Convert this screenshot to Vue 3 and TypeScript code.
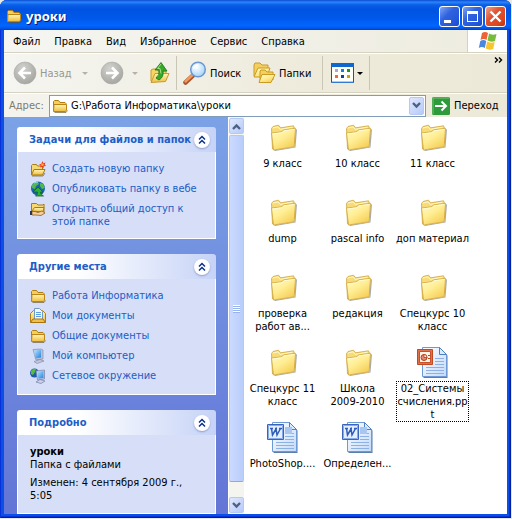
<script setup lang="ts">
import { ref } from 'vue'

interface Task { icon: string; label: string }
interface Entry { kind: 'folder' | 'ppt' | 'doc'; label: string; focused?: boolean }

const menus: string[] = ['Файл', 'Правка', 'Вид', 'Избранное', 'Сервис', 'Справка']
const address = ref('G:\\Работа Информатика\\уроки')

const groups: { title: string; items: Task[] }[] = [
  {
    title: 'Задачи для файлов и папок',
    items: [
      { icon: 'new', label: 'Создать новую папку' },
      { icon: 'publish', label: 'Опубликовать папку в вебе' },
      { icon: 'share', label: 'Открыть общий доступ к\nэтой папке' },
    ],
  },
  {
    title: 'Другие места',
    items: [
      { icon: 'folder', label: 'Работа Информатика' },
      { icon: 'docs', label: 'Мои документы' },
      { icon: 'folder', label: 'Общие документы' },
      { icon: 'computer', label: 'Мой компьютер' },
      { icon: 'network', label: 'Сетевое окружение' },
    ],
  },
]

const entries: Entry[] = [
  { kind: 'folder', label: '9 класс' },
  { kind: 'folder', label: '10 класс' },
  { kind: 'folder', label: '11 класс' },
  { kind: 'folder', label: 'dump' },
  { kind: 'folder', label: 'pascal info' },
  { kind: 'folder', label: 'доп материал' },
  { kind: 'folder', label: 'проверка\nработ ав...' },
  { kind: 'folder', label: 'редакция' },
  { kind: 'folder', label: 'Спецкурс 10\nкласс' },
  { kind: 'folder', label: 'Спецкурс 11\nкласс' },
  { kind: 'folder', label: 'Школа\n2009-2010' },
  { kind: 'ppt', label: '02_Системы\nсчисления.pp\nt', focused: true },
  { kind: 'doc', label: 'PhotoShop....' },
  { kind: 'doc', label: 'Определен...' },
]
</script>

<template>
  <svg class="defs" width="0" height="0" aria-hidden="true">
    <defs>
      <linearGradient id="gFolder" x1="0" y1="0" x2="0.7" y2="1">
        <stop offset="0" stop-color="#fffbc8" /><stop offset="0.5" stop-color="#ffee94" /><stop offset="1" stop-color="#f5cd55" />
      </linearGradient>
      <linearGradient id="gSmall" x1="0" y1="0" x2="0" y2="1">
        <stop offset="0" stop-color="#fff6b8" /><stop offset="1" stop-color="#f0bd3c" />
      </linearGradient>
      <radialGradient id="gGrey" cx="0.4" cy="0.3" r="0.75">
        <stop offset="0" stop-color="#d2d2ce" /><stop offset="1" stop-color="#a3a3a0" />
      </radialGradient>
      <linearGradient id="gScreen" x1="0" y1="0" x2="1" y2="1">
        <stop offset="0" stop-color="#b9e6ff" /><stop offset="1" stop-color="#1f7fe0" />
      </linearGradient>
      <linearGradient id="gPage" x1="0" y1="0" x2="1" y2="1">
        <stop offset="0" stop-color="#ffffff" /><stop offset="1" stop-color="#c3dafa" />
      </linearGradient>
      <radialGradient id="gLens" cx="0.4" cy="0.35" r="0.7">
        <stop offset="0" stop-color="#ffffff" /><stop offset="1" stop-color="#9fd2f8" />
      </radialGradient>
      <symbol id="i-folder" viewBox="0 0 16 16">
        <path d="M1.5 13V3.5l1-1h4l1.500 2h5l1 1V7" fill="#f4cf60" stroke="#b07d10" />
        <path d="M1.500 13.500 2 6.500h12.500V12l-1 1.500z" fill="url(#gSmall)" stroke="#bb8515" />
        <path d="M2.500 14.500h11.500l1.500-2" fill="none" stroke="#6b5420" stroke-opacity=".65" />
      </symbol>
      <symbol id="i-new" viewBox="0 0 16 16">
        <path d="M1.500 14V4.500l1-1h4l1 1.500h5V8" fill="#f6d873" stroke="#a87a18" />
        <path d="M1.500 14 4 8.500h11L12.500 14z" fill="url(#gSmall)" stroke="#a87a18" />
        <path d="M2 15h11l2-3" fill="none" stroke="#5c4820" stroke-opacity=".6" />
        <path d="m12.500 0 .8 2.200 2.200-.7-.8 2 1.300 1.500-2.200.3-.3 2.200-1.500-1.700-2 .8.700-2.100L9 3.300l2.300-.3z" fill="#ed3d16" />
        <circle cx="12.500" cy="3.800" r="1.300" fill="#ffad39" />
      </symbol>
      <symbol id="i-publish" viewBox="0 0 16 16">
        <circle cx="8" cy="7.500" r="7" fill="#1c62b8" />
        <path d="M2 4q3-4 6-3l1 2-3 2-1 3-3-1zM10 2l3 1 2 4-3 1-2-3z" fill="#55b947" />
        <path d="M4 2q2-1 4-1" stroke="#a5d8ff" fill="none" />
        <path d="m8 6 5 5h-2.500q0 3 3 4h-8q2-1 2-4H3z" fill="#2fae34" stroke="#08661b" stroke-width=".8" />
      </symbol>
      <symbol id="i-share" viewBox="0 0 16 16">
        <path d="M1.500 12V2.500h5L8 4h5l1-1v9z" fill="#f8d871" stroke="#a87a18" />
        <path d="M2 10 4.500 6.500H14L13 11z" fill="url(#gSmall)" stroke="#a87a18" />
        <path d="M2 10.500h3L8 11.500l4-1.500 3 2-4 2.500-5-.5H2z" fill="#f4cf9c" stroke="#8c5e2c" stroke-width=".8" />
        <path d="M0 10h2v4H0z" fill="#26375c" />
      </symbol>
      <symbol id="i-docs" viewBox="0 0 16 16">
        <path d="M.5 14V5.500l3-3h9l3 3V14z" fill="url(#gSmall)" stroke="#ad7d17" />
        <path d="M4.500.5h5l3 3V12h-8z" fill="#eef7ff" stroke="#7796bf" />
        <path d="M6 4.500h5M6 6.500h5M6 8.500h5" stroke="#5c9ce0" />
        <path d="M.5 14.500 3 11h10l2.500 3.500z" fill="#f0c04b" stroke="#a7730e" />
      </symbol>
      <symbol id="i-computer" viewBox="0 0 16 16">
        <path d="M3 1.500 11 1l2 1v9l-7 1z" fill="#b9c1d8" stroke="#8790b3" stroke-width=".7" />
        <path d="m4 2.500 7-.5v7.500l-6 1z" fill="url(#gScreen)" />
        <path d="m7 11.500 4-.5 1 2-4 1z" fill="#8f98b4" />
        <path d="m4 13.500 6-2 4 1.500-7 2.500z" fill="#c4c9de" stroke="#848cab" stroke-width=".7" />
      </symbol>
      <symbol id="i-network" viewBox="0 0 16 16">
        <circle cx="4.500" cy="5" r="4.500" fill="#2258b5" />
        <path d="M1 3q2-3 5-2L5 4 3 7 1 6z" fill="#56bd3f" />
        <path d="m6 3 8.500-1v9L7.500 12z" fill="#c4cbe0" stroke="#747fa8" stroke-width=".7" />
        <path d="m7 4 6.500-1v7l-5 .8z" fill="url(#gScreen)" />
        <path d="m6 14 4-2.500 5 1.500-4 2.500z" fill="#cdd2e6" stroke="#747fa8" stroke-width=".7" />
      </symbol>
      <symbol id="i-big" viewBox="0 0 32 32">
        <path d="m8 30 20.500-3.500L30 8.500l-1.500-.5-1 18L7 29z" fill="#444" opacity=".45" />
        <path d="M5.500 28 4.500 7.500l1.500-2 5.500-1.300 2.200 2.600 12.800-2 1 2.500V22z" fill="#f6db78" stroke="#cfa640" stroke-width=".8" />
        <path d="m5.800 7 5.200-1.200 2.200 2.600 12.300-2.200" fill="none" stroke="#fff9cc" />
        <path d="m4.500 12 10.300-1.200 1.700-1.900 12-1.600-1.300 18.500L6.500 29z" fill="url(#gFolder)" stroke="#d0a43c" stroke-width=".8" />
        <path d="m5.500 12.900 9.700-1.200 1.800-1.900 10.500-1.400" fill="none" stroke="#fffde0" stroke-width=".8" />
      </symbol>
      <symbol id="i-page" viewBox="0 0 32 32">
        <path d="M6.500 2h16l8 7.500V32h-24z" fill="#24548e" opacity=".75" />
        <path d="M5.500 1.500h17l7 7v22h-24z" fill="url(#gPage)" stroke="#6d9ad6" />
        <path d="M22.500 1.500v7h7z" fill="#dcebfd" stroke="#4e7fc2" />
        <path d="M18 12.500h9M18 15.500h9M18 18.500h9M9 21.500h18M9 24.500h18M9 27.500h18" stroke="#8db1e3" />
      </symbol>
      <symbol id="i-ppt" viewBox="0 0 32 32">
        <use href="#i-page" />
        <path d="M.5 3.500h15v15H.5z" fill="#e2714b" stroke="#c04a20" />
        <path d="M2.500 5.500h11v11h-11z" fill="#fff3ea" stroke="#c8502a" />
        <circle cx="7" cy="11.500" r="3" fill="#e58a68" stroke="#b03e18" />
        <path d="M7 11.500V8.500a3 3 0 0 1 3 3z" fill="#fff3ea" stroke="#b03e18" stroke-width=".8" />
        <path d="M11 9.500h2M11 12.500h2" stroke="#c54718" />
      </symbol>
      <symbol id="i-doc" viewBox="0 0 32 32">
        <use href="#i-page" />
        <path d="M18 6h7v7h-7z" fill="#a8c6ef" />
        <path d="M.5 3.500h16v15H.5z" fill="#e3efff" stroke="#3a63ba" />
        <path d="M1.500 4.500h14v13h-14z" fill="none" stroke="#86abea" />
        <path d="M3 7.500h3M4.500 7.500 5.500 14 9 8 10 14 13.500 7.500M12 7.500h3M8 7.500h2" fill="none" stroke="#2f5cb8" stroke-width="1.500" />
      </symbol>
    </defs>
  </svg>

  <main class="window">
    <header class="titlebar">
      <svg class="i16"><use href="#i-folder" /></svg>
      <h1>уроки</h1>
      <div class="controls">
        <button aria-label="Свернуть"><svg viewBox="0 0 21 21"><path d="M5 14h7v3H5z" fill="#fff" /></svg></button>
        <button aria-label="Развернуть"><svg viewBox="0 0 21 21"><path d="M5 5h11v11H5zM6 8v7h9V8z" fill="#fff" fill-rule="evenodd" /></svg></button>
        <button class="close" aria-label="Закрыть"><svg viewBox="0 0 21 21"><path d="m5.500 5.500 10 10m0-10-10 10" stroke="#fff" stroke-width="2.400" /></svg></button>
      </div>
    </header>

    <div class="client">
      <div class="menurow">
        <nav class="menu"><button v-for="m in menus" :key="m">{{ m }}</button></nav>
        <div class="flag">
          <svg width="20" height="20" viewBox="0 0 20 20">
            <path d="M4 2q3-2 6 0L8.500 9q-3-2-6 0z" fill="#ee6335" />
            <path d="M11 2.500q3 2 7.500.5L17 10q-4 1.500-7.500-.5z" fill="#77bb3c" />
            <path d="M2.300 10q3-2 6 0l-1.500 7q-3-2-6 0z" fill="#4b87df" />
            <path d="M9.200 10.500q3 2 7.500.5l-1.500 7q-4 1.500-7.500-.5z" fill="#f7c52e" />
          </svg>
        </div>
      </div>

      <div class="toolbar">
        <button class="tool back" disabled>
          <svg width="24" height="24" viewBox="0 0 24 24"><circle cx="12" cy="12" r="11" fill="url(#gGrey)" stroke="#aaa9a4" stroke-width=".6" /><path d="M18 12H7m5-5.500L6.500 12l5.500 5.500" fill="none" stroke="#fff" stroke-width="2.600" /></svg>
          <span>Назад</span>
        </button>
        <span class="arrow dim"></span>
        <button class="tool forward" disabled aria-label="Вперед">
          <svg width="24" height="24" viewBox="0 0 24 24"><circle cx="12" cy="12" r="11" fill="url(#gGrey)" stroke="#aaa9a4" stroke-width=".6" /><path d="M6 12h11m-5-5.500 5.500 5.500-5.500 5.500" fill="none" stroke="#fff" stroke-width="2.600" /></svg>
        </button>
        <span class="arrow dim"></span>
        <button class="tool up" aria-label="Вверх">
          <svg width="20" height="24" viewBox="0 0 20 24">
            <path d="M1 20V9l2-1h4l1 2h8v9z" fill="#f5d566" stroke="#c89b29" />
            <path d="m1 21.500 4-9h14l-3.500 8z" fill="url(#gSmall)" stroke="#c89b29" />
            <path d="M9 19q5-3 4-9h4L11 1.500 5 9h4q1 5-3 8z" fill="#35a828" stroke="#14721a" stroke-width=".8" />
            <path d="m11 3-3.500 4.500H10l1 5" fill="none" stroke="#a1e184" />
          </svg>
        </button>
        <i class="sep"></i>
        <button class="tool search">
          <svg width="24" height="24" viewBox="0 0 24 24">
            <path d="m2.500 21.500 8-7.500" stroke="#a8572d" stroke-width="4.500" stroke-linecap="round" /><path d="m2.500 20.500 7.500-7" stroke="#f29a5b" stroke-width="2.400" stroke-linecap="round" />
            <circle cx="15" cy="8.500" r="7.300" fill="url(#gLens)" stroke="#6c97d3" stroke-width="1.500" />
            <path d="M10.500 8q1-4 5-4" fill="none" stroke="#fff" stroke-width="1.500" />
          </svg>
          <span>Поиск</span>
        </button>
        <button class="tool folders">
          <svg width="24" height="24" viewBox="0 0 24 24">
            <path d="M2 15V4l1-2h5l2 2h6v8" fill="#f4d05b" stroke="#c99a28" /><path d="m2 16 4-9h12l-3 9z" fill="url(#gFolder)" stroke="#c99a28" />
            <path d="M8 20V10l1-1h4l2 2h6v8" fill="#f4d05b" stroke="#c99a28" /><path d="m7 21.500 3-8h13l-4 8z" fill="url(#gFolder)" stroke="#c99a28" />
          </svg>
          <span>Папки</span>
        </button>
        <i class="sep"></i>
        <button class="tool views" aria-label="Вид">
          <svg width="23" height="20" viewBox="0 0 23 20">
            <path d="M.5.5h22v19H.5z" fill="#fffffa" stroke="#0b58b8" /><path d="M0 0h23v4H0z" fill="#1068cf" /><path d="M1 19h21" stroke="#5b9cea" />
            <path d="M4 6h3v3H4z" fill="#aaa6d8" /><path d="M10 6h3v3h-3z" fill="#1480e0" /><path d="M16 6h3v3h-3z" fill="#149a28" />
            <path d="M4 12h3v3H4z" fill="#f1683d" /><path d="M10 12h3v3h-3z" fill="#123caf" /><path d="M16 12h3v3h-3z" fill="#d99b10" />
          </svg>
          <span class="arrow"></span>
        </button>
        <i class="sep"></i>
        <button class="more" aria-label="Другие кнопки"><svg width="9" height="6" viewBox="0 0 9 6"><path d="m1 .5 2.500 2.500L1 5.500M5 .5 7.500 3 5 5.500" fill="none" stroke="#000" stroke-width="1.400" /></svg></button>
      </div>

      <div class="addressbar">
        <label for="addr">Адрес:</label>
        <div class="combo">
          <svg class="i16"><use href="#i-folder" /></svg>
          <input id="addr" v-model="address" type="text" />
          <button class="chev" aria-label="Список"><svg width="9" height="7" viewBox="0 0 9 7"><path d="m1 1 3.500 3.500L8 1" fill="none" stroke="#4d6185" stroke-width="2.400" /></svg></button>
        </div>
        <button class="go">
          <svg width="18" height="18" viewBox="0 0 18 18"><rect width="18" height="18" rx="1.500" fill="#2f9a3b" /><path d="M1 17V1h16" fill="none" stroke="#73c36f" /><path d="M3 9h11M9.500 4.500 14 9l-4.500 4.500" fill="none" stroke="#fff" stroke-width="2" /></svg>
          <span>Переход</span>
        </button>
      </div>

      <div class="body">
        <aside class="tasks">
          <section v-for="g in groups" :key="g.title" class="group">
            <div class="head">
              <h2>{{ g.title }}</h2>
              <button class="fold" aria-label="Свернуть раздел"><svg viewBox="0 0 16 16"><path d="m5 7.500 3-3 3 3m-6 4 3-3 3 3" fill="none" stroke="#0a318f" stroke-width="1.500" /></svg></button>
            </div>
            <ul>
              <li v-for="t in g.items" :key="t.label"><a href="#"><svg class="i16"><use :href="'#i-' + t.icon" /></svg><span>{{ t.label }}</span></a></li>
            </ul>
          </section>
          <section class="group last">
            <div class="head">
              <h2>Подробно</h2>
              <button class="fold" aria-label="Свернуть раздел"><svg viewBox="0 0 16 16"><path d="m5 7.500 3-3 3 3m-6 4 3-3 3 3" fill="none" stroke="#0a318f" stroke-width="1.500" /></svg></button>
            </div>
            <div class="details">
              <b>уроки</b>
              <p>Папка с файлами</p>
              <p class="date">Изменен: 4 сентября 2009 г.,<br />5:05</p>
            </div>
          </section>
        </aside>

        <div class="scroll">
          <button class="chev" aria-label="Вверх"><svg width="9" height="7" viewBox="0 0 9 7"><path d="m1 6 3.500-3.500L8 6" fill="none" stroke="#4d6185" stroke-width="2.400" /></svg></button>
          <div class="thumb"><i></i></div>
          <button class="chev" aria-label="Вниз"><svg width="9" height="7" viewBox="0 0 9 7"><path d="m1 1 3.500 3.500L8 1" fill="none" stroke="#4d6185" stroke-width="2.400" /></svg></button>
        </div>

        <ul class="files">
          <li v-for="e in entries" :key="e.label">
            <svg class="i32"><use :href="e.kind === 'folder' ? '#i-big' : '#i-' + e.kind" /></svg>
            <span :class="{ focused: e.focused }">{{ e.label }}</span>
          </li>
        </ul>
      </div>
    </div>
  </main>
</template>

<style>
body { background: #e6e9e4; }
</style>

<style scoped>
* { box-sizing: border-box; }
.defs { position: absolute; }
.window {
  display: flex; flex-direction: column;
  min-height: calc(100vh - 1px); margin-right: 1px; padding: 0 4px 4px;
  background: #0a4fe6; border-radius: 7px 7px 0 0;
  box-shadow: inset 1px 0 #0831d9, inset -1px -1px #001ea0, inset -2px -2px #0831d9;
  font: 11px/13px "DejaVu Sans Condensed", "DejaVu Sans", sans-serif; color: #000;
}
button { font: inherit; color: inherit; border: 0; padding: 0; margin: 0; background: none; display: flex; align-items: center; }
h1, h2, p, ul { margin: 0; padding: 0; list-style: none; }
svg { display: block; flex: none; }
.i16 { width: 16px; height: 16px; }
.i32 { width: 32px; height: 32px; }

.titlebar {
  display: flex; align-items: center; height: 30px; margin: 0 -4px; padding: 2px 5px 0 6px;
  border-radius: 7px 7px 0 0;
  background: linear-gradient(#0a4bd0 0, #2a86fb 7%, #0a5fe8 16%, #0053e1 30%, #0058ea 60%, #0066ff 85%, #0059ee 93%, #003dd0);
}
.titlebar h1 { flex: 1; margin-left: 4px; font: bold 13px/16px "Noto Sans", "DejaVu Sans Condensed", sans-serif; color: #fff; text-shadow: 1px 1px #0a1883; }
.controls { display: flex; gap: 2px; }
.controls button { width: 21px; height: 21px; border: 1px solid #fff; border-radius: 3px; background: linear-gradient(135deg, #7fa6f6, #2f62de 40%, #2458dc 75%, #1a4ac6); }
.controls svg { width: 21px; height: 21px; margin: -1px; }
.controls .close { background: linear-gradient(135deg, #f3a08a, #df5331 40%, #dd4720 75%, #bb3210); }

.client { flex: 1; display: flex; flex-direction: column; background: #efeddf; }
.menurow { display: flex; height: 23px; border-bottom: 1px solid #d5d2c2; background: linear-gradient(90deg, #f5f5f2, #eeecdf); }
.menu { flex: 1; display: flex; padding-left: 2px; border-right: 1px solid #d5d2c2; }
.menu button { padding: 0 7px; }
.flag { width: 39px; display: flex; align-items: center; justify-content: center; background: #fff; }

.toolbar { display: flex; align-items: center; height: 40px; padding-left: 9px; border-top: 1px solid #fff; border-bottom: 1px solid #d5d2c2; background: linear-gradient(90deg, #f5f5f1, #eeebdc 60%, #ece9d8); }
.tool { gap: 3px; }
.back { color: #99988f; width: 69px; }
.forward { margin-left: 12px; width: 32px; }
.arrow { width: 0; height: 0; border: 3px solid transparent; border-top-color: #000; border-bottom: 0; }
.arrow.dim { border-top-color: #b5b3a9; }
.up { margin: 0 6px 0 12px; }
.sep { width: 1px; height: 34px; background: #c9c6b6; }
.search { margin-left: 6px; width: 69px; }
.folders { margin-right: 10px; width: 60px; }
.views { margin: 0 6px 0 8px; }
.more { align-self: flex-start; margin: 3px 4px 0 auto; }

.addressbar { display: flex; align-items: center; height: 24px; padding-left: 5px; border-top: 1px solid #fff; background: linear-gradient(90deg, #f4f3ed, #ece9d8); }
.addressbar label { width: 40px; color: #7d7b72; }
.combo { flex: 1; min-width: 0; display: flex; align-items: center; height: 22px; padding: 0 1px 0 2px; border: 1px solid #7f9db9; background: #fff; }
.combo input { flex: 1; min-width: 0; height: 18px; margin-left: 3px; padding: 0; border: 0; outline: 0; background: none; font: inherit; }
.chev { width: 15px; height: 18px; flex: none; justify-content: center; border: 1px solid #b6c9f5; border-radius: 2px; background: linear-gradient(135deg, #dfe8ff, #b6caf8); }
.go { gap: 4px; width: 81px; padding-left: 6px; }

.body { flex: 1; display: flex; }
.tasks { width: 224px; padding: 10px 12px 0 13px; display: flex; flex-direction: column; gap: 15px; background: linear-gradient(#7ba2e7, #6375d6); }
.group { display: flex; flex-direction: column; }
.last { flex: 1; }
.head { display: flex; align-items: center; height: 25px; padding: 0 6px 0 12px; border-radius: 3px 3px 0 0; background: linear-gradient(90deg, #fff 30%, #c6d3f7); }
.head h2 { flex: 1; white-space: nowrap; font: bold 11px/13px "DejaVu Sans Condensed", "DejaVu Sans", sans-serif; color: #215dc6; }
.fold { width: 16px; height: 16px; flex: none; border-radius: 50%; background: #fff; box-shadow: 0 1px 2px #8f9dc8; }
.fold svg { width: 16px; height: 16px; }
.group ul, .details { border: 1px solid #fff; border-top: 0; background: #d6dff7; }
.group ul { display: flex; flex-direction: column; gap: 4px; padding: 9px 12px 10px; }
.group a { display: flex; gap: 6px; color: #215dc6; text-decoration: none; }
.group a span { white-space: pre; padding-top: 1px; }
.details { flex: 1; padding: 10px 12px; white-space: nowrap; }
.details .date { margin-top: 5px; }

.scroll { width: 16px; display: flex; flex-direction: column; padding: 1px 0; gap: 1px; background: #f5f5f0; border-left: 1px solid #fff; }
.scroll .chev { height: 16px; }
.thumb { flex: 1; display: flex; align-items: center; justify-content: center; width: 15px; margin-bottom: 14px; border: 1px solid #b4c8f6; border-bottom-color: #8ea9df; border-radius: 2px; background: linear-gradient(90deg, #cbdafe, #b9cdfb); }
.thumb i { width: 7px; height: 8px; background: repeating-linear-gradient(#fff 0 1px, #98b4ef 1px 2px); }

.files { flex: 1; display: grid; align-content: start; grid-template-columns: repeat(auto-fill, 75px); grid-auto-rows: 75px; padding: 4px 0 0 1px; background: #fff; }
.files li { display: flex; flex-direction: column; align-items: center; gap: 4px; }
.files span { white-space: pre; text-align: center; }
.files .focused { outline: 1px dotted #000; }
</style>
